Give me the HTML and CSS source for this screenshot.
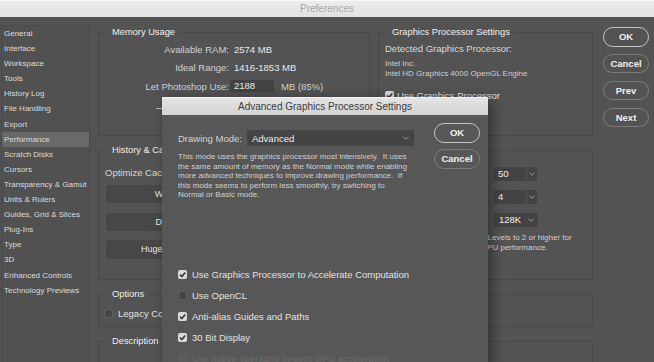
FILE: index.html
```html
<!DOCTYPE html>
<html lang="en">
<head>
    <meta charset="UTF-8">
    <meta name="viewport" content="width=device-width, initial-scale=1.0">
    <title>Preferences</title>
    <link rel="stylesheet" href="styles.css">
</head>
<body>
    <div class="window">
        <div class="titlebar">Preferences</div>
        <div class="content">
            <ul class="nav">
                <li>General</li>
                <li>Interface</li>
                <li>Workspace</li>
                <li>Tools</li>
                <li>History Log</li>
                <li>File Handling</li>
                <li>Export</li>
                <li class="active">Performance</li>
                <li>Scratch Disks</li>
                <li>Cursors</li>
                <li>Transparency &amp; Gamut</li>
                <li>Units &amp; Rulers</li>
                <li>Guides, Grid &amp; Slices</li>
                <li>Plug-Ins</li>
                <li>Type</li>
                <li>3D</li>
                <li>Enhanced Controls</li>
                <li>Technology Previews</li>
            </ul>

            <div class="main">
                <div class="top-row">
                    <fieldset class="group memory">
                        <legend>Memory Usage</legend>
                        <div class="mem-grid">
                            <span class="mem-label">Available RAM:</span>
                            <span class="mem-value">2574 MB</span>
                            <span class="mem-label">Ideal Range:</span>
                            <span class="mem-value">1416-1853 MB</span>
                            <span class="mem-label">Let Photoshop Use:</span>
                            <span class="mem-input-row">
                                <span class="mem-input">2188</span>
                                <span class="mem-unit">MB (85%)</span>
                            </span>
                        </div>
                        <div class="slider"><div class="slider-track"></div></div>
                    </fieldset>

                    <fieldset class="group gpu">
                        <legend>Graphics Processor Settings</legend>
                        <div class="gpu-detected">Detected Graphics Processor:</div>
                        <div class="gpu-name">
                            <div>Intel Inc.</div>
                            <div>Intel HD Graphics 4000 OpenGL Engine</div>
                        </div>
                        <label class="check-row gpu-use">
                            <span class="box checked"><svg viewBox="0 0 9 9" width="9" height="9"><path d="M2 4.6 L3.9 6.5 L7.2 2.4" fill="none" stroke="#3b3b3b" stroke-width="1.6"/></svg></span>
                            Use Graphics Processor
                        </label>
                        <div class="gpu-advanced">Advanced Settings...</div>
                    </fieldset>
                </div>

                <fieldset class="group history">
                    <legend>History &amp; Cache</legend>
                    <div class="history-cols">
                        <div class="history-left">
                            <div class="history-caption">Optimize Cache Levels and Tile Size for:</div>
                            <div class="preset-list">
                                <div class="preset">Web / UI Design</div>
                                <div class="preset">Default / Photos</div>
                                <div class="preset">Huge Pixel Dimensions</div>
                            </div>
                        </div>
                        <div class="history-right">
                            <div class="cache-grid">
                                <span class="cache-label">History States:</span>
                                <span class="dropdown">
                                    <span class="dropdown-value short">50</span>
                                    <span class="dropdown-arrow"><svg viewBox="0 0 6 4" width="6" height="4"><path d="M0.5 0.8 L3 3.2 L5.5 0.8" fill="none" stroke="#9a9a9a" stroke-width="1"/></svg></span>
                                </span>
                                <span class="cache-label">Cache Levels:</span>
                                <span class="dropdown">
                                    <span class="dropdown-value short">4</span>
                                    <span class="dropdown-arrow"><svg viewBox="0 0 6 4" width="6" height="4"><path d="M0.5 0.8 L3 3.2 L5.5 0.8" fill="none" stroke="#9a9a9a" stroke-width="1"/></svg></span>
                                </span>
                                <span class="cache-label">Cache Tile Size:</span>
                                <span class="dropdown single">
                                    <span class="dropdown-value">128K</span>
                                    <svg viewBox="0 0 6 4" width="6" height="4"><path d="M0.5 0.8 L3 3.2 L5.5 0.8" fill="none" stroke="#9a9a9a" stroke-width="1"/></svg>
                                </span>
                            </div>
                            <p class="cache-note">Set Cache Levels to 2 or higher for<br>optimum GPU performance.</p>
                        </div>
                    </div>
                </fieldset>

                <fieldset class="group options">
                    <legend>Options</legend>
                    <label class="check-row legacy">
                        <span class="box"></span>
                        Legacy Compositing
                    </label>
                </fieldset>

                <fieldset class="group description">
                    <legend>Description</legend>
                </fieldset>
            </div>

            <div class="actions">
                <button class="pill default">OK</button>
                <button class="pill">Cancel</button>
                <button class="pill">Prev</button>
                <button class="pill">Next</button>
            </div>
        </div>

        <div class="dialog">
            <div class="dialog-title">Advanced Graphics Processor Settings</div>
            <div class="dialog-body">
                <div class="dialog-top">
                    <div class="dialog-main">
                        <div class="mode-row">
                            <span class="mode-label">Drawing Mode:</span>
                            <span class="mode-select">
                                Advanced
                                <svg viewBox="0 0 6 4" width="6" height="4"><path d="M0.5 0.8 L3 3.2 L5.5 0.8" fill="none" stroke="#9a9a9a" stroke-width="1"/></svg>
                            </span>
                        </div>
                        <p class="mode-desc">This mode uses the graphics processor most intensively.&nbsp; It uses<br>the same amount of memory as the Normal mode while enabling<br>more advanced techniques to improve drawing performance.&nbsp; If<br>this mode seems to perform less smoothly, try switching to<br>Normal or Basic mode.</p>
                    </div>
                    <div class="dialog-actions">
                        <button class="pill default">OK</button>
                        <button class="pill">Cancel</button>
                    </div>
                </div>

                <div class="dialog-checks">
                    <label class="check-row">
                        <span class="box checked"><svg viewBox="0 0 9 9" width="9" height="9"><path d="M2 4.6 L3.9 6.5 L7.2 2.4" fill="none" stroke="#3b3b3b" stroke-width="1.6"/></svg></span>
                        Use Graphics Processor to Accelerate Computation
                    </label>
                    <label class="check-row">
                        <span class="box"></span>
                        Use OpenCL
                    </label>
                    <label class="check-row">
                        <span class="box checked"><svg viewBox="0 0 9 9" width="9" height="9"><path d="M2 4.6 L3.9 6.5 L7.2 2.4" fill="none" stroke="#3b3b3b" stroke-width="1.6"/></svg></span>
                        Anti-alias Guides and Paths
                    </label>
                    <label class="check-row">
                        <span class="box checked"><svg viewBox="0 0 9 9" width="9" height="9"><path d="M2 4.6 L3.9 6.5 L7.2 2.4" fill="none" stroke="#3b3b3b" stroke-width="1.6"/></svg></span>
                        30 Bit Display
                    </label>
                    <label class="check-row disabled">
                        <span class="box"></span>
                        Use native operating system GPU acceleration
                    </label>
                </div>
            </div>
        </div>
    </div>
</body>
</html>
```
FILE: styles.css
```css
body {
    margin: 0;
    font-family: "Liberation Sans", Arial, sans-serif;
    background-color: #535353;
}

.window {
    position: relative;
    width: 654px;
    height: 362px;
    overflow: hidden;
    background-color: #535353;
    color: #d6d6d6;
}

.titlebar {
    height: 17px;
    box-sizing: border-box;
    border-top: 1px solid #f8f8f8;
    background: linear-gradient(#ececec, #e2e2e2);
    text-align: center;
    font-size: 10px;
    line-height: 16px;
    color: #a6a6a6;
}

.content {
    display: flex;
    align-items: flex-start;
    padding-top: 8px;
}

/* left category list */
.nav {
    list-style: none;
    margin: 0 0 0 1px;
    padding: 0;
    width: 89px;
    height: 345px;
    box-sizing: border-box;
    border: 1px solid #4a4a4a;
    background-color: #515151;
}

.nav li {
    height: 15.1px;
    line-height: 15.1px;
    padding-left: 2px;
    font-size: 8px;
    color: #dcdcdc;
    white-space: nowrap;
}

.nav li.active {
    background-color: #696969;
}

/* main panel */
.main {
    margin: 1px 0 0 8px;
    width: 495px;
    display: flex;
    flex-direction: column;
    gap: 8px;
}

.top-row {
    display: flex;
    gap: 8px;
}

.group {
    box-sizing: border-box;
    margin: 0;
    padding: 0 6px;
    min-width: 0;
    border: 1px solid #494949;
}

.group legend {
    padding: 0 4px;
    margin-left: 3px;
    font-size: 9.3px;
    line-height: 12px;
    color: #efefef;
}

.memory {
    width: 272px;
    height: 110px;
}

.gpu {
    width: 215px;
    height: 110px;
}

.mem-grid {
    display: grid;
    grid-template-columns: 124px auto;
    grid-auto-rows: 18.5px;
    align-items: center;
    margin-top: 2px;
    font-size: 9.5px;
}

.mem-label {
    text-align: right;
    color: #d2d2d2;
}

.mem-value {
    padding-left: 5px;
    color: #e8e8e8;
}

.mem-input-row {
    display: flex;
    align-items: center;
}

.mem-input {
    margin-left: 1px;
    width: 44px;
    height: 12px;
    line-height: 12px;
    box-sizing: border-box;
    padding-left: 4px;
    background-color: #434343;
    color: #ececec;
}

.mem-unit {
    margin-left: 7px;
    color: #d2d2d2;
}

.slider {
    margin: 12px 0 0 51px;
}

.slider-track {
    width: 170px;
    height: 1.5px;
    background-color: #b8b8b8;
}

.gpu-detected {
    margin-top: 5px;
    font-size: 9.5px;
    line-height: 12px;
    color: #dadada;
}

.gpu-name {
    margin-top: 4px;
    font-size: 8px;
    line-height: 10px;
    color: #d0d0d0;
}

.check-row {
    display: flex;
    align-items: center;
    gap: 5px;
    font-size: 9.5px;
    color: #e2e2e2;
}

.box {
    width: 9px;
    height: 9px;
    flex: none;
    box-sizing: border-box;
    border: 1px solid #626262;
    border-radius: 2px;
    background-color: #464646;
}

.box.checked {
    border: none;
    background-color: #dadada;
}

.box svg {
    display: block;
}

.gpu-use {
    margin-top: 10px;
    height: 12px;
    gap: 3px;
}

.gpu-advanced {
    margin-top: 10px;
    width: 95px;
    height: 18px;
    line-height: 18px;
    text-align: center;
    font-size: 9px;
    border-radius: 2px;
    background-color: #474747;
}

.history {
    height: 136px;
}

.history-cols {
    display: flex;
    gap: 8px;
}

.history-left {
    width: 265px;
}

.history-caption {
    margin-top: 10.7px;
    font-size: 9.5px;
    line-height: 12px;
    color: #d6d6d6;
}

.preset-list {
    margin: 6.3px 0 0 1px;
    display: flex;
    flex-direction: column;
    gap: 9.2px;
}

.preset {
    width: 163px;
    height: 18.5px;
    line-height: 18.5px;
    text-align: center;
    font-size: 9px;
    color: #e6e6e6;
    background-color: #474747;
    border-radius: 2px;
}

.history-right {
    flex: 1;
}

.cache-grid {
    display: grid;
    grid-template-columns: 104px auto;
    grid-auto-rows: 14px;
    row-gap: 8.7px;
    column-gap: 12px;
    align-items: center;
    margin-top: 11.3px;
    font-size: 9.5px;
}

.cache-label {
    text-align: right;
}

.dropdown {
    display: flex;
    height: 14px;
    gap: 1px;
}

.dropdown-value {
    box-sizing: border-box;
    height: 14px;
    line-height: 14px;
    padding-left: 4px;
    color: #f0f0f0;
    background-color: #434343;
}

.dropdown-value.short {
    width: 32px;
}

.dropdown-arrow {
    width: 10px;
    display: flex;
    align-items: center;
    justify-content: center;
    background-color: #434343;
}

.dropdown.single {
    width: 44px;
    align-items: center;
    gap: 0;
    background-color: #434343;
}

.dropdown.single .dropdown-value {
    padding-left: 5px;
    width: 34px;
}

.cache-note {
    margin: 6.6px 0 0;
    padding-left: 70px;
    font-size: 8px;
    line-height: 10px;
    color: #d2d2d2;
}

.options {
    height: 39px;
}

.legacy {
    margin: 7.5px 0 0 -1px;
    height: 12px;
}

.description {
    height: 60px;
}

/* right side buttons */
.actions {
    margin: 2px 0 0 10px;
    width: 46px;
    display: flex;
    flex-direction: column;
    gap: 7.3px;
}

.pill {
    width: 46px;
    height: 19.6px;
    padding: 0;
    border: 1px solid #7c7c7c;
    border-radius: 10px;
    background: transparent;
    font-family: "Liberation Sans", Arial, sans-serif;
    font-size: 9.5px;
    font-weight: bold;
    color: #f0f0f0;
}

.pill.default {
    border: 1.5px solid #c4c4c4;
}

/* overlay dialog */
.dialog {
    position: absolute;
    left: 162px;
    top: 97px;
    width: 326px;
    height: 270px;
    background-color: #575757;
    box-shadow: 4px 2px 12px rgba(0, 0, 0, 0.4);
}

.dialog-title {
    height: 18px;
    box-sizing: border-box;
    border-top: 1px solid #f2f2f2;
    background: linear-gradient(#e4e4e4, #d2d2d2);
    text-align: center;
    font-size: 10px;
    line-height: 17px;
    color: #3c3c3c;
}

.dialog-body {
    padding: 8px 8px 0 16px;
}

.dialog-top {
    display: flex;
    justify-content: space-between;
    align-items: flex-start;
}

.dialog-main {
    margin-top: 7px;
}

.mode-row {
    display: flex;
    align-items: center;
    font-size: 9.5px;
}

.mode-label {
    width: 69px;
    color: #d4d4d4;
}

.mode-select {
    display: flex;
    justify-content: space-between;
    align-items: center;
    box-sizing: border-box;
    width: 167px;
    height: 16px;
    padding: 0 5px 0 5px;
    background-color: #444;
    color: #ececec;
}

.mode-desc {
    margin: 6px 0 0;
    font-size: 8px;
    line-height: 9.5px;
    color: #d0d0d0;
    white-space: nowrap;
}

.dialog-actions {
    display: flex;
    flex-direction: column;
    gap: 6.5px;
}

.dialog-checks {
    margin-top: 64px;
}

.dialog-checks .check-row {
    height: 21px;
}

.check-row.disabled {
    color: #6c6c6c;
}

.check-row.disabled .box {
    background-color: #5b5b5b;
    border-color: #5e5e5e;
}
```
